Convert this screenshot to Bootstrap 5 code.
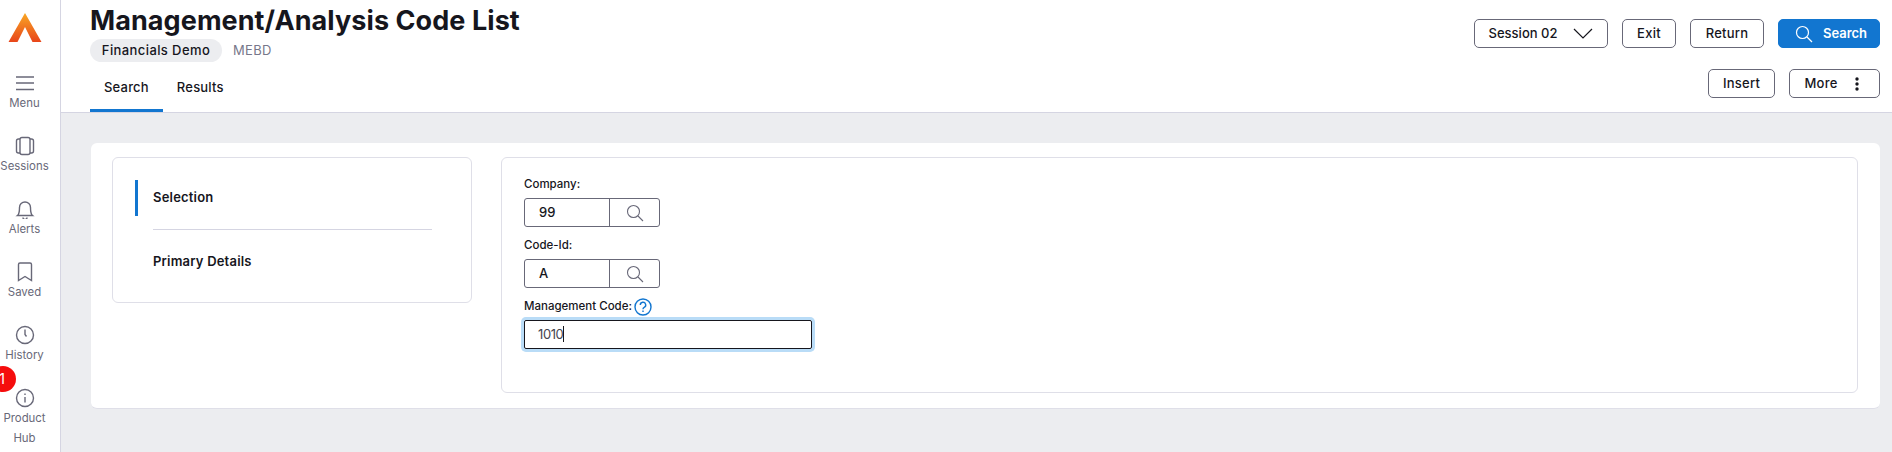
<!DOCTYPE html>
<html lang="en">
<head>
    <meta charset="UTF-8">
    <title>Management/Analysis Code List</title>
    <meta name="viewport" content="width=device-width, initial-scale=1">
    <link href="https://cdn.jsdelivr.net/npm/bootstrap@5.3.3/dist/css/bootstrap.min.css" rel="stylesheet">
    <style>
        html, body {
            height: 452px;
            overflow: hidden;
        }
        body {
            font-family: Inter, "Open Sans", sans-serif;
            color: #16161d;
            background: #ecedf0;
            font-size: 13px;
        }
        .side-rail {
            width: 61px;
            height: 452px;
            background: #fff;
            border-right: 1px solid #d5d5e2;
            padding-right: 11px;
            position: relative;
            overflow: hidden;
        }
        .rail-logo {
            height: 63px;
            padding-top: 13px;
        }
        .rail-item {
            height: 63px;
            color: #686878;
            font-size: 11.4px;
            line-height: 20px;
            text-align: center;
            white-space: nowrap;
        }
        .rail-item svg {
            display: block;
            height: 20px;
            width: 20px;
            flex-shrink: 0;
        }
        .rail-stack {
            padding-top: 10px;
        }
        .rail-badge {
            position: absolute;
            left: -10px;
            top: 366px;
            width: 26px;
            height: 26px;
            border-radius: 50%;
            background: #f50d0d;
            color: #fff;
            font-size: 14px;
            line-height: 26px;
            text-align: center;
            padding-right: 2px;
        }
        .top-head {
            height: 113px;
            background: #fff;
            border-bottom: 1px solid #d5d5e2;
            padding: 0 12px 0 29px;
        }
        .page-title {
            font-size: 27px;
            font-weight: 700;
            line-height: 36px;
            margin: 3px 0 0;
            letter-spacing: .07px;
            color: #16161d;
        }
        .demo-pill {
            background: #ecedf0;
            border-radius: 12px;
            height: 23px;
            width: 132px;
            line-height: 22px;
            text-align: center;
            font-size: 13px;
            font-weight: 500;
            letter-spacing: .4px;
        }
        .demo-code {
            color: #77778a;
            font-size: 13px;
            margin-left: 11px;
            letter-spacing: .3px;
        }
        .head-tabs {
            margin-top: 16px;
        }
        .head-tab {
            height: 34px;
            line-height: 19px;
            font-size: 13px;
            font-weight: 500;
            padding: 0 14px;
            letter-spacing: .2px;
            border-bottom: 3px solid transparent;
        }
        .head-tab.is-on {
            border-bottom-color: #1276d0;
        }
        .head-btn {
            height: 29px;
            border: 1px solid #686878;
            border-radius: 5px;
            background: #fff;
            color: #16161d;
            font-size: 13px;
            font-weight: 500;
            letter-spacing: .25px;
            padding: 0;
            display: flex;
            align-items: center;
            justify-content: center;
        }
        .head-btn.is-blue {
            background: #1276d0;
            border-color: #1276d0;
            color: #fff;
            font-weight: 600;
        }
        .w-session { width: 134px; gap: 16px; letter-spacing: 0; }
        .w-exit { width: 54px; }
        .w-return { width: 74px; }
        .w-search { width: 102px; gap: 10px; padding-left: 4px; letter-spacing: 0; }
        .w-insert { width: 67px; }
        .w-more { width: 91px; gap: 17px; padding-right: 6px; }
        .btn-row-a {
            padding-top: 19px;
            gap: 14px;
        }
        .btn-row-b {
            padding-top: 21px;
            gap: 14px;
        }
        .main-pane {
            padding: 30px 12px 0 30px;
        }
        .outer-box {
            height: 266px;
            background: #fff;
            border-radius: 6px;
            border-bottom: 1px solid #dfdfe8;
            padding: 14px 22px 0 21px;
            gap: 29px;
        }
        .nav-box {
            width: 360px;
            height: 146px;
            border: 1px solid #dfdfe8;
            border-radius: 6px;
            padding: 22px 0 0 22px;
        }
        .nav-entry {
            height: 36px;
            line-height: 35px;
            padding-left: 15px;
            font-size: 13px;
            font-weight: 600;
            letter-spacing: .2px;
            border-left: 3px solid transparent;
        }
        .nav-entry.is-on {
            border-left-color: #1276d0;
        }
        .nav-line {
            width: 279px;
            height: 1px;
            background: #d5d5e2;
            margin: 13px 0 0 18px;
        }
        .nav-entry.second {
            margin-top: 14px;
        }
        .form-box {
            height: 236px;
            border: 1px solid #dfdfe8;
            border-radius: 6px;
            padding: 18px 0 0 22px;
        }
        .fld-label {
            font-size: 11.5px;
            font-weight: 500;
            line-height: 17px;
            height: 17px;
            margin-bottom: 5px;
            display: flex;
            align-items: center;
            gap: 2px;
        }
        .lookup {
            width: 136px;
            height: 29px;
            border: 1px solid #686878;
            border-radius: 3px;
            margin-bottom: 10px;
            font-size: 13px;
            font-weight: 500;
        }
        .lookup-val {
            width: 85px;
            padding-left: 14px;
            line-height: 27px;
            border-right: 1px solid #686878;
        }
        .lookup-btn {
            flex: 1;
        }
        .code-input {
            width: 288px;
            height: 29px;
            border: 1px solid #16161d;
            border-radius: 2px;
            box-shadow: 0 0 0 3px #b9dcf7;
            padding: 0 13px;
            font-size: 13px;
            line-height: 27px;
            letter-spacing: -.4px;
            color: #45454f;
        }
        .caret-mark {
            display: inline-block;
            width: 1px;
            height: 16px;
            background: #16161d;
            vertical-align: -3px;
        }
    </style>
</head>
<body>
<div class="d-flex">
    <nav class="side-rail flex-shrink-0">
        <div class="rail-logo d-flex justify-content-center">
            <svg width="34" height="30" viewBox="0 0 34 30" class="flex-shrink-0">
                <defs>
                    <linearGradient id="logoFill" x1="0" y1="0" x2="0" y2="1">
                        <stop offset="0" stop-color="#f9a825"/>
                        <stop offset="1" stop-color="#e8451a"/>
                    </linearGradient>
                </defs>
                <path d="M17 0 L33.500 29 L24.500 29 L17 14 L9.500 29 L0.500 29 Z" fill="url(#logoFill)"/>
            </svg>
        </div>
        <div class="rail-stack">
            <div class="rail-item d-flex flex-column align-items-center">
                <svg viewBox="3 3 20 20" fill="none" stroke="#686878" stroke-width="1.400"><path d="M4 7H22M4 13H22M4 19.500H22"/></svg>
                <span>Menu</span>
            </div>
            <div class="rail-item d-flex flex-column align-items-center">
                <svg viewBox="3 3 20 20" fill="none" stroke="#686878" stroke-width="1.400"><rect x="8" y="4.500" width="10" height="17" rx="2"/><path d="M8 6H6.500a2 2 0 0 0-2 2v10a2 2 0 0 0 2 2H8M18 6h1.500a2 2 0 0 1 2 2v10a2 2 0 0 1-2 2H18"/></svg>
                <span>Sessions</span>
            </div>
            <div class="rail-item d-flex flex-column align-items-center">
                <svg viewBox="3 3 20 20" fill="none" stroke="#686878" stroke-width="1.400"><path d="M5.500 19.500c2-1.500 2-3.500 2-8a5.500 5.500 0 0 1 11 0c0 4.500 0 6.500 2 8Z"/><path d="M11 21.500a2 2 0 0 0 4 0"/></svg>
                <span>Alerts</span>
            </div>
            <div class="rail-item d-flex flex-column align-items-center">
                <svg viewBox="3 3 20 20" fill="none" stroke="#686878" stroke-width="1.400"><path d="M6.500 5.500A1.500 1.500 0 0 1 8 4h10a1.500 1.500 0 0 1 1.500 1.500V21.500L13 17.500l-6.500 4Z"/></svg>
                <span>Saved</span>
            </div>
            <div class="rail-item d-flex flex-column align-items-center">
                <svg viewBox="3 3 20 20" fill="none" stroke="#686878" stroke-width="1.400"><circle cx="13" cy="13" r="8.500"/><path d="M13 7.500V12.500l1.500 2"/></svg>
                <span>History</span>
            </div>
            <div class="rail-item d-flex flex-column align-items-center">
                <svg viewBox="3 3 20 20" fill="none" stroke="#686878" stroke-width="1.400"><circle cx="13" cy="13" r="8.500"/><path d="M13 12v5.500M13 8.500v1.500"/></svg>
                <span>Product</span>
                <span>Hub</span>
            </div>
        </div>
        <div class="rail-badge">1</div>
    </nav>
    <div class="flex-grow-1">
        <header class="top-head d-flex justify-content-between">
            <div>
                <h1 class="page-title">Management/Analysis Code List</h1>
                <div class="d-flex align-items-center">
                    <div class="demo-pill">Financials Demo</div>
                    <div class="demo-code">MEBD</div>
                </div>
                <div class="head-tabs d-flex">
                    <div class="head-tab is-on">Search</div>
                    <div class="head-tab">Results</div>
                </div>
            </div>
            <div>
                <div class="btn-row-a d-flex justify-content-end">
                    <button class="head-btn w-session">Session 02
                        <svg width="20" height="11" viewBox="0 0 20 11" fill="none" stroke="#16161d" stroke-width="1.200"><path d="M1 1l9 9 9-9"/></svg>
                    </button>
                    <button class="head-btn w-exit">Exit</button>
                    <button class="head-btn w-return">Return</button>
                    <button class="head-btn is-blue w-search">
                        <svg width="18" height="18" viewBox="0 0 18 18" fill="none" stroke="#fff" stroke-width="1.200"><circle cx="7.500" cy="7.500" r="6"/><path d="M12 12l5 5"/></svg>
                        Search
                    </button>
                </div>
                <div class="btn-row-b d-flex justify-content-end">
                    <button class="head-btn w-insert">Insert</button>
                    <button class="head-btn w-more">More
                        <svg width="4" height="14" viewBox="0 0 4 14" fill="#16161d"><circle cx="2" cy="2" r="1.700"/><circle cx="2" cy="7" r="1.700"/><circle cx="2" cy="12" r="1.700"/></svg>
                    </button>
                </div>
            </div>
        </header>
        <main class="main-pane">
            <div class="outer-box d-flex">
                <div class="nav-box flex-shrink-0">
                    <div class="nav-entry is-on">Selection</div>
                    <div class="nav-line"></div>
                    <div class="nav-entry second">Primary Details</div>
                </div>
                <div class="form-box flex-grow-1">
                    <div class="fld-label">Company:</div>
                    <div class="lookup d-flex">
                        <div class="lookup-val">99</div>
                        <div class="lookup-btn d-flex align-items-center justify-content-center">
                            <svg width="18" height="18" viewBox="0 0 18 18" fill="none" stroke="#686878" stroke-width="1.100"><circle cx="7.500" cy="7.500" r="6"/><path d="M12 12l5 5"/></svg>
                        </div>
                    </div>
                    <div class="fld-label">Code-Id:</div>
                    <div class="lookup d-flex">
                        <div class="lookup-val">A</div>
                        <div class="lookup-btn d-flex align-items-center justify-content-center">
                            <svg width="18" height="18" viewBox="0 0 18 18" fill="none" stroke="#686878" stroke-width="1.100"><circle cx="7.500" cy="7.500" r="6"/><path d="M12 12l5 5"/></svg>
                        </div>
                    </div>
                    <div class="fld-label">Management Code:
                        <svg width="18" height="18" viewBox="0 0 18 18" fill="none" stroke="#1276d0" stroke-width="1.400"><circle cx="9" cy="9" r="8"/><path d="M6.300 7a2.700 2.700 0 1 1 3.900 2.400c-.8.400-1.200.9-1.200 1.800M9 12.500v1.600"/></svg>
                    </div>
                    <div class="code-input">1010<span class="caret-mark"></span></div>
                </div>
            </div>
        </main>
    </div>
</div>
<script src="https://cdn.jsdelivr.net/npm/bootstrap@5.3.3/dist/js/bootstrap.bundle.min.js"></script>
</body>
</html>
